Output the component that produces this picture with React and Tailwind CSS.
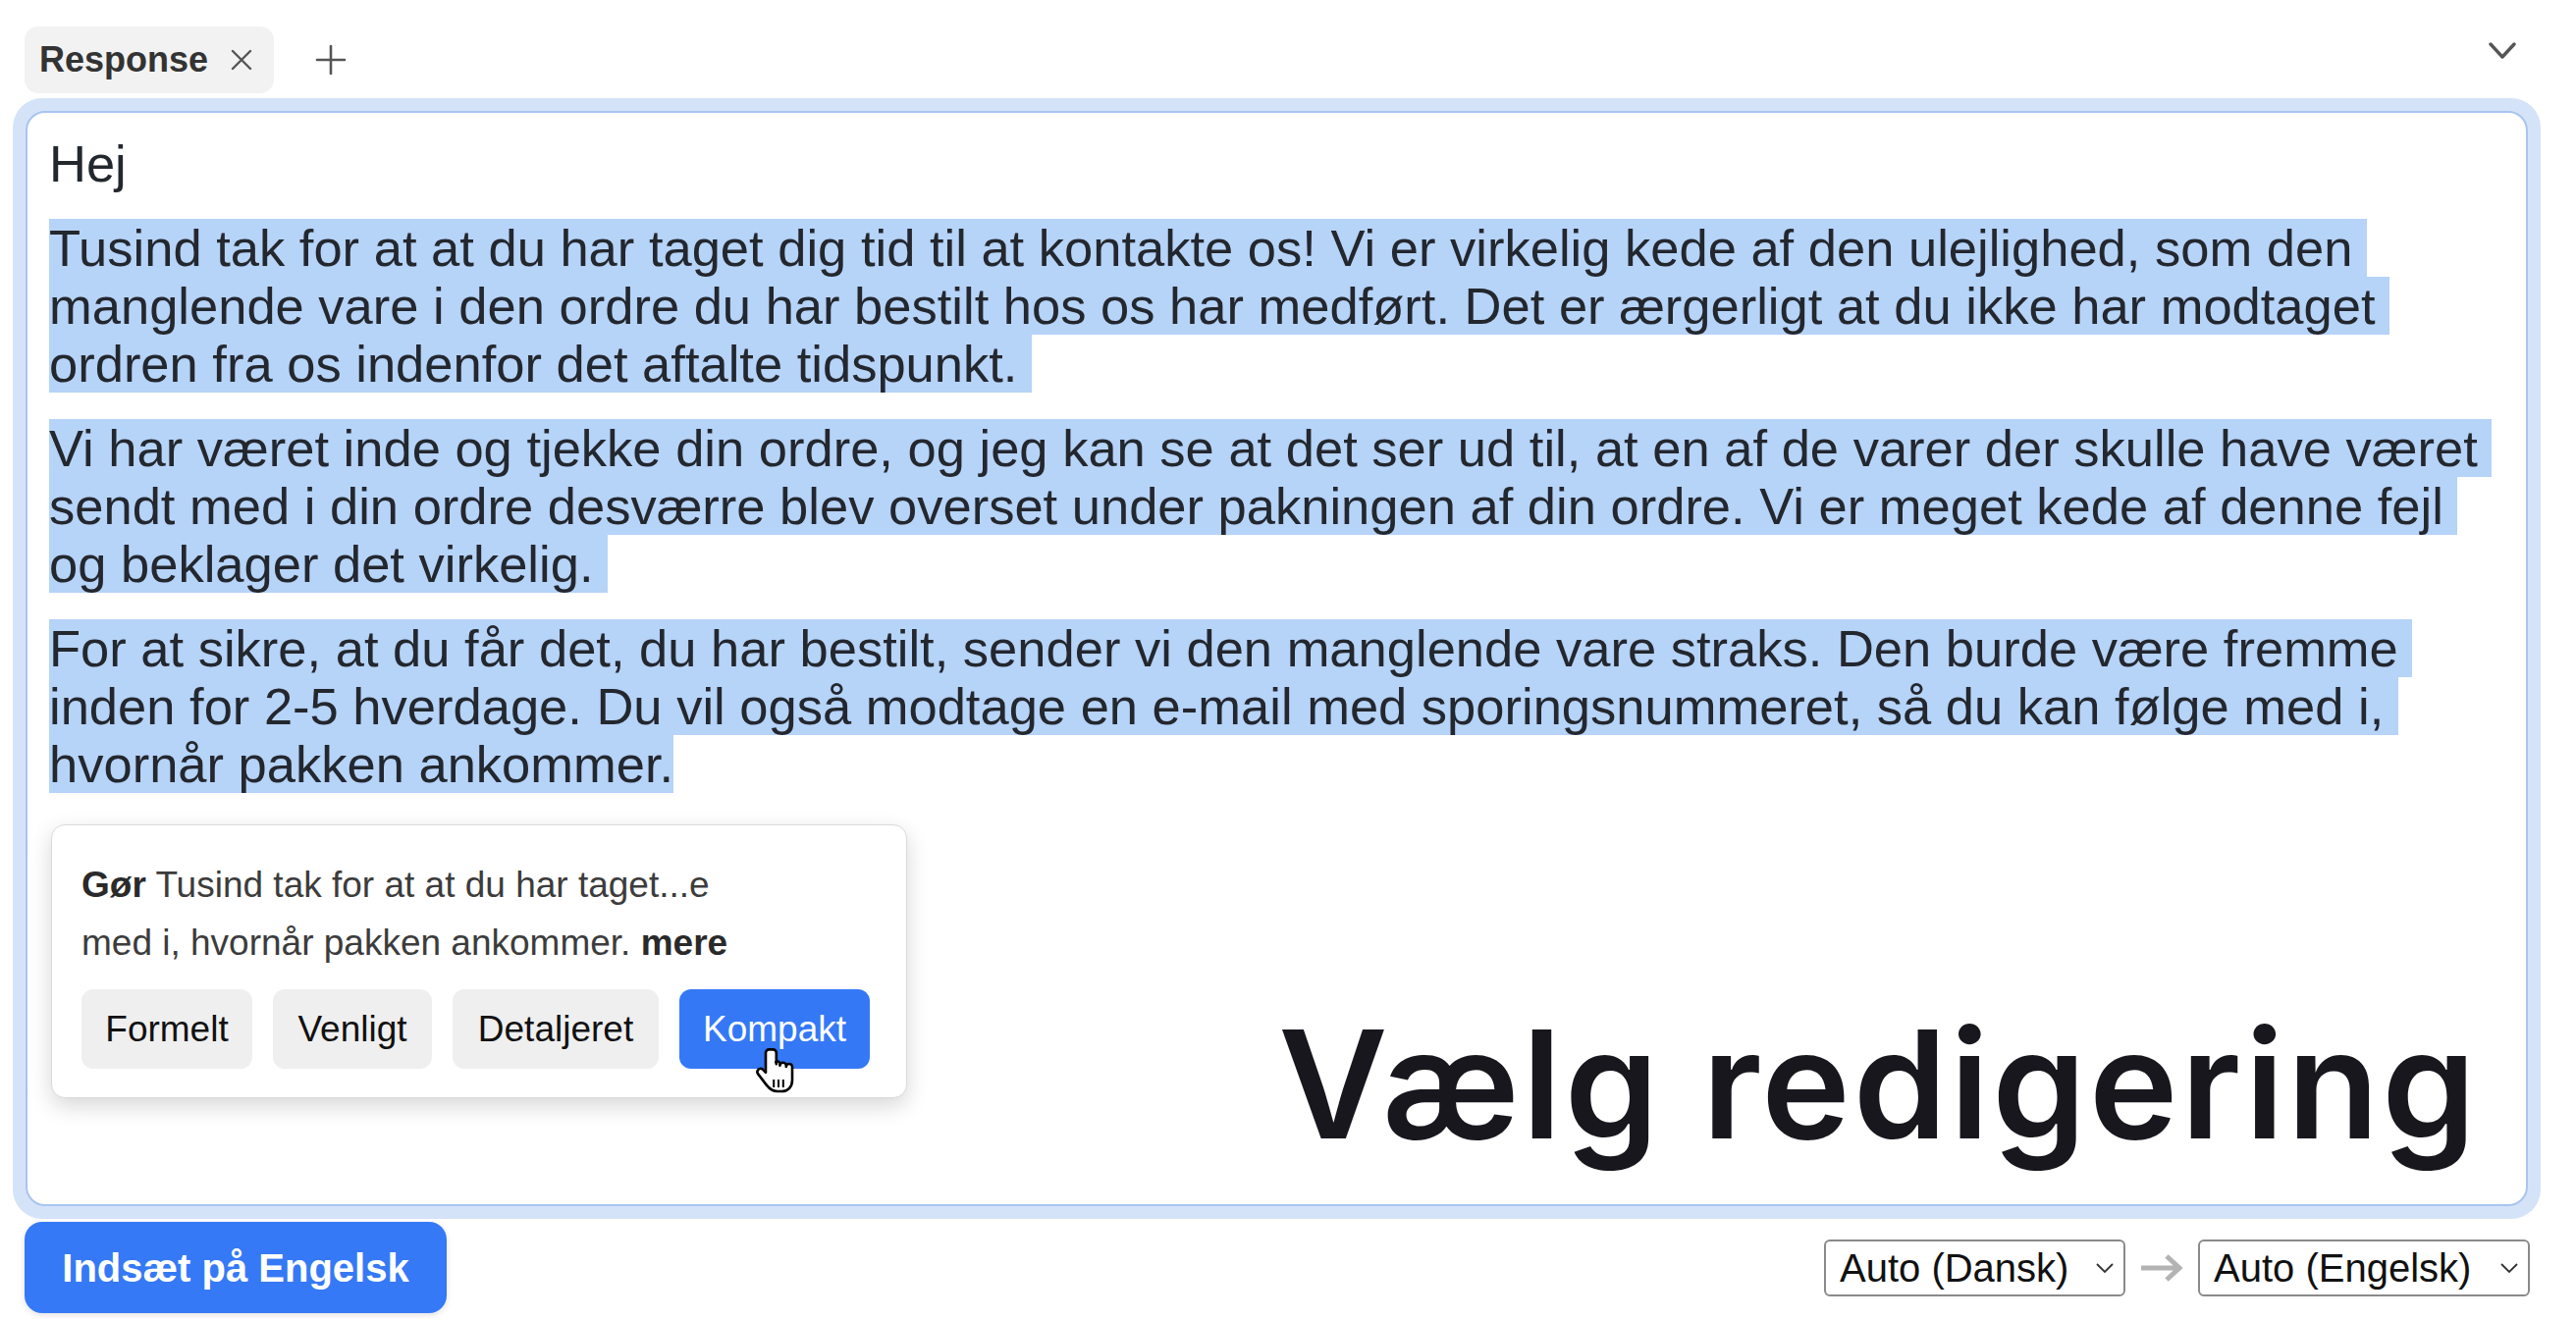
import React from "react";

const paragraphs = [
  [
    "Tusind tak for at at du har taget dig tid til at kontakte os! Vi er virkelig kede af den ulejlighed, som den ",
    "manglende vare i den ordre du har bestilt hos os har medført. Det er ærgerligt at du ikke har modtaget ",
    "ordren fra os indenfor det aftalte tidspunkt. ",
  ],
  [
    "Vi har været inde og tjekke din ordre, og jeg kan se at det ser ud til, at en af de varer der skulle have været ",
    "sendt med i din ordre desværre blev overset under pakningen af din ordre. Vi er meget kede af denne fejl ",
    "og beklager det virkelig. ",
  ],
  [
    "For at sikre, at du får det, du har bestilt, sender vi den manglende vare straks. Den burde være fremme ",
    "inden for 2-5 hverdage. Du vil også modtage en e-mail med sporingsnummeret, så du kan følge med i, ",
    "hvornår pakken ankommer.",
  ],
];

function HandCursor() {
  return (
    <svg width="46" height="50" viewBox="0 0 23 25" className="absolute left-[714px] top-[226px]">
      <path
        d="M8.2 1.2c-1 0-1.7.8-1.7 1.7v10l-1.4-1.5c-.7-.7-1.8-.7-2.4 0-.6.6-.6 1.6-.1 2.3l4.3 5.6c1.1 1.4 2.6 3.2 5.6 3.2h2.2c3.2 0 5.3-2.4 5.3-5.6V10c0-.9-.7-1.5-1.6-1.5s-1.5.6-1.5 1.5v-.6c0-.9-.7-1.5-1.6-1.5s-1.6.6-1.6 1.5v-.8c0-.9-.7-1.5-1.6-1.5S11.9 7.7 11.9 8.6V2.9c0-.9-.7-1.7-1.7-1.7z"
        fill="#fff"
        stroke="#000"
        strokeWidth="1.3"
        strokeLinejoin="round"
      />
      <path d="M10.6 16.5v4M13 16.5v4M15.4 16.5v4" stroke="#000" strokeWidth="1" />
    </svg>
  );
}

export default function App() {
  return (
    <div className="w-[2624px] h-[1344px] bg-white overflow-hidden flex flex-col font-['Liberation_Sans',Arial,sans-serif]">
      {/* Header */}
      <div className="h-[100px] flex items-start justify-between pl-[25px] pr-[60px]">
        <div className="flex items-center mt-[27px]">
          <div className="h-[68px] rounded-[14px] bg-[#f2f2f2] pl-[15px] pr-[21px] flex items-center gap-[22px]">
            <span className="text-[36px] font-bold text-[#333333]">Response</span>
            <svg width="24" height="24" viewBox="0 0 24 24">
              <path d="M3 3L21 21M21 3L3 21" stroke="#555" strokeWidth="2.4" strokeLinecap="round" />
            </svg>
          </div>
          <svg width="32" height="32" viewBox="0 0 32 32" className="ml-[42px]">
            <path d="M16 2V30M2 16H30" stroke="#555" strokeWidth="2.6" strokeLinecap="round" />
          </svg>
        </div>
        <svg width="30" height="20" viewBox="0 0 30 20" className="mt-[42px]">
          <path d="M3 3L15 16L27 3" stroke="#555" strokeWidth="3.4" fill="none" strokeLinecap="round" strokeLinejoin="round" />
        </svg>
      </div>

      {/* Panel */}
      <div className="ml-[13px] w-[2575px] h-[1142px] rounded-[30px] bg-[#d5e3f9] p-[13px]">
        <div className="relative h-full rounded-[20px] border-2 border-[#a8c5ef] bg-white pl-[22px] pt-[22px] overflow-hidden">
          <div className="flex flex-col gap-[27px] text-[52.5px] leading-[59px] text-[#23272e]">
            <div>Hej</div>
            {paragraphs.map((p, i) => (
              <div key={i}>
                {p.map((line, j) => (
                  <div key={j} className="whitespace-pre">
                    <span className="bg-[#b6d3f8]">{line}</span>
                  </div>
                ))}
              </div>
            ))}
          </div>

          {/* Popover card */}
          <div className="relative mt-[32px] ml-[2px] w-[872px] h-[279px] rounded-[14px] border border-[#dadada] bg-white shadow-[0_8px_22px_rgba(0,0,0,0.16)] px-[30px] pt-[31px]">
            <div className="text-[37px] leading-[59px] text-[#3c3c3c] whitespace-nowrap">
              <div>
                <span className="font-bold text-[#2a2a2a]">Gør</span> Tusind tak for at at du har taget...e
              </div>
              <div>
                med i, hvornår pakken ankommer. <span className="font-bold text-[#2a2a2a]">mere</span>
              </div>
            </div>
            <div className="mt-[18px] flex gap-[21px] text-[37px]">
              <div className="w-[174px] h-[81px] rounded-[12px] bg-[#efefef] text-[#111] flex items-center justify-center">Formelt</div>
              <div className="w-[162px] h-[81px] rounded-[12px] bg-[#efefef] text-[#111] flex items-center justify-center">Venligt</div>
              <div className="w-[210px] h-[81px] rounded-[12px] bg-[#efefef] text-[#111] flex items-center justify-center">Detaljeret</div>
              <div className="w-[194px] h-[81px] rounded-[12px] bg-[#3478f6] text-white flex items-center justify-center">Kompakt</div>
            </div>
            <HandCursor />
          </div>

          <div className="absolute right-[48px] bottom-[46px] text-[153px] leading-none font-semibold tracking-[3px] font-['Inter',sans-serif] text-[#17171d] whitespace-nowrap">
            Vælg redigering
          </div>
        </div>
      </div>

      {/* Bottom bar */}
      <div className="flex items-start justify-between pl-[25px] pr-[47px] pt-[3px]">
        <div className="w-[430px] h-[93px] rounded-[18px] bg-[#3579f6] text-white text-[40px] font-bold flex items-center justify-center shadow-[0_2px_6px_rgba(0,0,0,0.12)]">
          Indsæt på Engelsk
        </div>
        <div className="mt-[18px] flex items-center">
          <div className="w-[307px] h-[58px] border-2 border-[#8a8a8a] rounded-[6px] bg-white pl-[14px] pr-[9px] flex items-center justify-between text-[40px] text-[#111]">
            <span>Auto (Dansk)</span>
            <svg width="20" height="12" viewBox="0 0 20 12">
              <path d="M2 2L10 10L18 2" stroke="#333" strokeWidth="1.8" fill="none" />
            </svg>
          </div>
          <svg width="48" height="32" viewBox="0 0 48 32" className="mx-[13px]">
            <path d="M3 16H42M29 4L42 16L29 28" stroke="#b3b3b3" strokeWidth="5" fill="none" strokeLinejoin="miter" />
          </svg>
          <div className="w-[338px] h-[58px] border-2 border-[#8a8a8a] rounded-[6px] bg-white pl-[14px] pr-[9px] flex items-center justify-between text-[40px] text-[#111]">
            <span>Auto (Engelsk)</span>
            <svg width="20" height="12" viewBox="0 0 20 12">
              <path d="M2 2L10 10L18 2" stroke="#333" strokeWidth="1.8" fill="none" />
            </svg>
          </div>
        </div>
      </div>
    </div>
  );
}
